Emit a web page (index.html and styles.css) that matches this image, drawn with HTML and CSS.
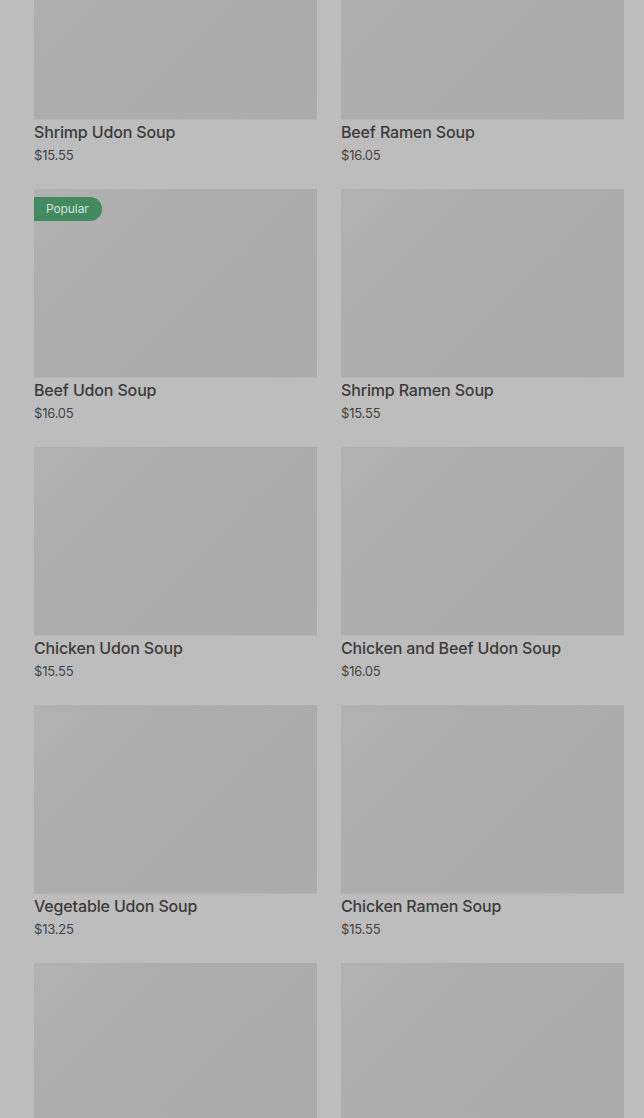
FILE: index.html
```html
<!DOCTYPE html>
<html lang="en">

<head>
    <meta charset="UTF-8">
    <meta name="viewport" content="width=device-width, initial-scale=1.0">
    <title>Menu</title>
    <link rel="stylesheet" href="styles.css">
</head>

<body>
    <div class="menu-grid">
        <div class="menu-card">
            <div class="menu-image"></div>
            <div class="menu-title">Shrimp Udon Soup</div>
            <div class="menu-price">$15.55</div>
        </div>
        <div class="menu-card">
            <div class="menu-image"></div>
            <div class="menu-title">Beef Ramen Soup</div>
            <div class="menu-price">$16.05</div>
        </div>
        <div class="menu-card">
            <div class="menu-image">
                <span class="badge">Popular</span>
            </div>
            <div class="menu-title">Beef Udon Soup</div>
            <div class="menu-price">$16.05</div>
        </div>
        <div class="menu-card">
            <div class="menu-image"></div>
            <div class="menu-title">Shrimp Ramen Soup</div>
            <div class="menu-price">$15.55</div>
        </div>
        <div class="menu-card">
            <div class="menu-image"></div>
            <div class="menu-title">Chicken Udon Soup</div>
            <div class="menu-price">$15.55</div>
        </div>
        <div class="menu-card">
            <div class="menu-image"></div>
            <div class="menu-title">Chicken and Beef Udon Soup</div>
            <div class="menu-price">$16.05</div>
        </div>
        <div class="menu-card">
            <div class="menu-image"></div>
            <div class="menu-title">Vegetable Udon Soup</div>
            <div class="menu-price">$13.25</div>
        </div>
        <div class="menu-card">
            <div class="menu-image"></div>
            <div class="menu-title">Chicken Ramen Soup</div>
            <div class="menu-price">$15.55</div>
        </div>
        <div class="menu-card">
            <div class="menu-image"></div>
        </div>
        <div class="menu-card">
            <div class="menu-image"></div>
        </div>
    </div>
</body>

</html>
```

FILE: styles.css
```css
body {
    margin: 0;
    padding: 0;
    background-color: #bdbdbd;
    font-family: 'Inter', 'Roboto', sans-serif;
    color: #3a3a3a;
    overflow: hidden;
    height: 1118px;
}

.menu-grid {
    display: grid;
    grid-template-columns: 283px 283px;
    column-gap: 24px;
    row-gap: 23px;
    padding: 0 20px 0 34px;
    margin-top: -69px;
}

.menu-image {
    position: relative;
    height: 188px;
    background: linear-gradient(135deg, #b2b2b2 0%, #adadad 30%, #acacac 100%);
    border-bottom: 1px solid #b5b5b5;
}

.badge {
    position: absolute;
    top: 8px;
    left: 0;
    height: 24px;
    line-height: 24px;
    padding: 0 13px 0 12px;
    background: #438a62;
    color: #cde4d6;
    font-size: 12px;
    letter-spacing: -0.1px;
    border-radius: 0 12px 12px 0;
}

.menu-title {
    font-size: 16px;
    font-weight: 500;
    line-height: 24px;
    letter-spacing: -0.15px;
    color: #3b3b3b;
}

.menu-price {
    font-size: 13px;
    line-height: 22px;
    letter-spacing: -0.2px;
    color: #444;
}
```
